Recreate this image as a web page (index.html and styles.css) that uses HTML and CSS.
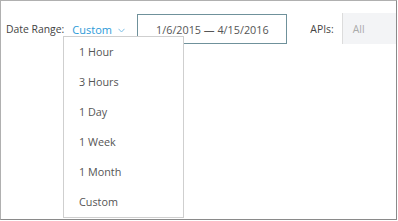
FILE: index.html
```html
<!DOCTYPE html>
<html lang="en">
<head>
    <meta charset="UTF-8">
    <title>Date Range</title>
    <link rel="stylesheet" href="styles.css">
</head>
<body>
<div class="frame">
    <div class="toolbar">
        <span class="label">Date Range:</span>
        <div class="range-select">
            <span class="range-value">Custom</span>
            <svg class="chevron" width="7" height="5" viewBox="0 0 7 5">
                <path d="M0.5 0.8 L3.5 4 L6.5 0.8" fill="none" stroke="#7fbfe6" stroke-width="1"/>
            </svg>
        </div>
        <div class="range-input">1/6/2015 — 4/15/2016</div>
        <span class="label apis-label">APIs:</span>
        <div class="apis-select">All</div>
    </div>

    <ul class="range-menu">
        <li>1 Hour</li>
        <li>3 Hours</li>
        <li>1 Day</li>
        <li>1 Week</li>
        <li>1 Month</li>
        <li>Custom</li>
    </ul>
</div>
</body>
</html>
```

FILE: styles.css
```css
html, body {
    margin: 0;
    padding: 0;
    background: #fff;
    font-family: "Open Sans", "DejaVu Sans", sans-serif;
    font-size: 10.4px;
}

.frame {
    position: relative;
    width: 397px;
    height: 220px;
    box-sizing: border-box;
    border: 1px solid #b0b0b0;
    border-right-color: #8a8a8a;
    border-bottom-color: #8a8a8a;
    overflow: hidden;
}

.toolbar {
    display: flex;
    align-items: center;
    height: 30px;
    padding: 13px 0 0 5px;
}

.label {
    color: #444;
}

.range-select {
    display: flex;
    align-items: center;
    width: 53px;
    margin-left: 8px;
    color: #2b9ad8;
    font-size: 11px;
}

.chevron {
    margin: 2px 0 0 auto;
}

.range-input {
    margin-left: 12px;
    width: 150px;
    height: 30px;
    box-sizing: border-box;
    border: 1px solid #6f919b;
    display: flex;
    align-items: center;
    justify-content: center;
    color: #555;
    font-size: 10.8px;
}

.apis-label {
    margin-left: 23px;
}

.apis-select {
    flex: 1;
    margin-left: 8px;
    height: 31px;
    margin-top: -1px;
    box-sizing: border-box;
    border-left: 1px solid #dcdcdc;
    background: #f3f4f6;
    padding-left: 10px;
    display: flex;
    align-items: center;
    color: #aaa;
}

.range-menu {
    position: absolute;
    left: 62px;
    top: 35px;
    width: 121px;
    margin: 0;
    padding: 0;
    list-style: none;
    box-sizing: border-box;
    border: 1px solid #cfcfcf;
    background: #fff;
}

.range-menu li {
    height: 30px;
    line-height: 30px;
    padding-left: 15px;
    color: #555;
    font-size: 10.8px;
}
```
